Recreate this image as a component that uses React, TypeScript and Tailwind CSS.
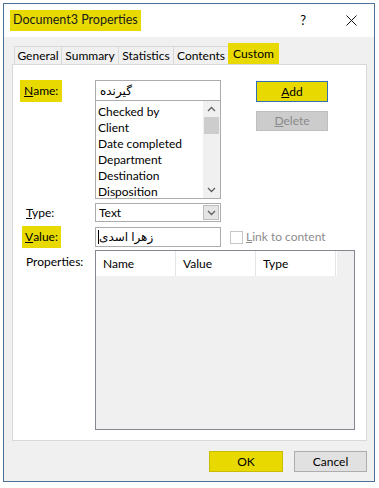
import { ReactNode } from "react";

const font = { fontFamily: 'Lato, "DejaVu Sans", sans-serif' };

function Hi({ children, className = "" }: { children: ReactNode; className?: string }) {
  return <span className={`bg-[#e8da00] ${className}`}>{children}</span>;
}

function Chevron({ up = false }: { up?: boolean }) {
  return (
    <svg width="9" height="6" viewBox="0 0 9 6">
      <path
        d={up ? "M1 5 L4.5 1.5 L8 5" : "M1 1 L4.5 4.5 L8 1"}
        fill="none"
        stroke="#606060"
        strokeWidth="1.3"
      />
    </svg>
  );
}

const names = [
  "Checked by",
  "Client",
  "Date completed",
  "Department",
  "Destination",
  "Disposition",
];

const tabs = [
  { t: "General", w: "w-[47px]" },
  { t: "Summary", w: "w-[57px]" },
  { t: "Statistics", w: "w-[55px]" },
  { t: "Contents", w: "w-[55px]" },
];

export default function App() {
  return (
    <div className="h-[488px] w-[379px] bg-white pl-[3px] pt-[3px] text-[12px] text-black" style={font}>
      <div className="flex h-[479px] w-[372px] flex-col border border-[#4d7096] bg-[#f0f0f0]">
        {/* title bar */}
        <div className="flex h-[33px] items-center bg-white pl-[6px]">
          <Hi className="flex h-[21px] items-center px-[3px] text-[12.5px] text-[#1a1a1a]">
            Document3 Properties
          </Hi>
          <span className="ml-auto mr-[40px] text-[13px]">?</span>
          <svg width="11" height="11" viewBox="0 0 11 11" className="mr-[17px]">
            <path d="M0.5 0.5 L10.5 10.5 M10.5 0.5 L0.5 10.5" stroke="#111" strokeWidth="1" />
          </svg>
        </div>

        {/* tabs */}
        <div className="mt-[9px] flex h-[18px] items-end pl-[10px]">
          {tabs.map(({ t, w }) => (
            <div
              key={t}
              className={`flex h-[18px] items-center justify-center border-l border-t border-[#d9d9d9] last:border-r ${w}`}
            >
              {t}
            </div>
          ))}
          <div className="-mb-px flex h-[22px] w-[51px] items-start justify-center bg-[#e8da00] pt-[2px]">Custom</div>
        </div>

        {/* panel */}
        <div className="ml-[8px] flex h-[377px] w-[355px] flex-col border border-[#d9d9d9] bg-white pl-[7px] pt-[15px]">
          {/* name row */}
          <div className="flex">
            <div className="w-[75px]">
              <Hi className="inline-flex h-[22px] items-center px-[4px]">
                <span className="underline">N</span>ame:
              </Hi>
            </div>
            <div className="flex w-[126px] flex-col">
              <div className="flex h-[21px] items-center border border-[#acacac] px-[4px]">
                <span dir="rtl">گیرنده</span>
              </div>
              <div className="flex h-[98px] border border-t-0 border-[#acacac]">
                <div className="flex flex-1 flex-col pl-[2px] pt-[3px] leading-[16px]">
                  {names.map((n) => (
                    <div key={n}>{n}</div>
                  ))}
                </div>
                <div className="flex w-[17px] flex-col items-center bg-[#f0f0f0]">
                  <div className="flex h-[16px] items-center">
                    <Chevron up />
                  </div>
                  <div className="h-[17px] w-[15px] bg-[#cdcdcd]" />
                  <div className="mt-auto flex h-[16px] items-center">
                    <Chevron />
                  </div>
                </div>
              </div>
            </div>
            <div className="ml-[35px] mt-px flex flex-col gap-[9px]">
              <div className="flex h-[21px] w-[72px] items-center justify-center border border-[#2f6fb3] bg-[#e8da00]">
                <span>
                  <span className="underline">A</span>dd
                </span>
              </div>
              <div className="flex h-[20px] w-[72px] items-center justify-center border border-[#bfbfbf] bg-[#cccccc] text-[#8a8a8a]">
                <span>
                  <span className="underline">D</span>elete
                </span>
              </div>
            </div>
          </div>

          {/* type row */}
          <div className="mt-[4px] flex items-center">
            <div className="w-[75px] pl-[6px]">
              <span className="underline">T</span>ype:
            </div>
            <div className="flex h-[19px] w-[126px] items-center border border-[#acacac] pl-[3px]">
              <span className="flex-1">Text</span>
              <div className="mr-px flex h-[15px] w-[16px] items-center justify-center border border-[#bdbdbd] bg-[#e5e5e5]">
                <Chevron />
              </div>
            </div>
          </div>

          {/* value row */}
          <div className="mt-[4px] flex items-center">
            <div className="w-[75px] pl-[2px]">
              <Hi className="inline-flex h-[22px] items-center px-[3px]">
                <span className="underline">V</span>alue:
              </Hi>
            </div>
            <div className="flex h-[20px] w-[126px] items-center border border-[#acacac] pl-[2px]">
              <span className="h-[14px] w-px bg-black" />
              <span dir="rtl">زهرا اسدی</span>
            </div>
            <div className="ml-[9px] h-[13px] w-[13px] border border-[#c6c6c6]" />
            <span className="ml-[3px] text-[#8c8c8c]">
              <span className="underline">L</span>ink to content
            </span>
          </div>

          {/* properties */}
          <div className="mt-[2px] flex">
            <div className="w-[75px] pl-[6px] pt-[3px]">Properties:</div>
            <div className="flex h-[180px] w-[260px] flex-col border border-[#828790] bg-[#f0f0f0]">
              <div className="flex h-[25px] w-[241px] bg-white">
                {["Name", "Value", "Type"].map((h) => (
                  <div key={h} className="flex w-[80px] items-center border-r border-[#e5e5e5] pl-[7px]">
                    {h}
                  </div>
                ))}
              </div>
            </div>
          </div>
        </div>

        {/* bottom buttons */}
        <div className="mt-[10px] flex justify-end gap-[11px] pr-[7px]">
          <div className="flex h-[21px] w-[74px] items-center justify-center border border-[#c9bc00] bg-[#e8da00]">
            OK
          </div>
          <div className="flex h-[21px] w-[73px] items-center justify-center border border-[#adadad] bg-[#e1e1e1]">
            Cancel
          </div>
        </div>
      </div>
    </div>
  );
}
